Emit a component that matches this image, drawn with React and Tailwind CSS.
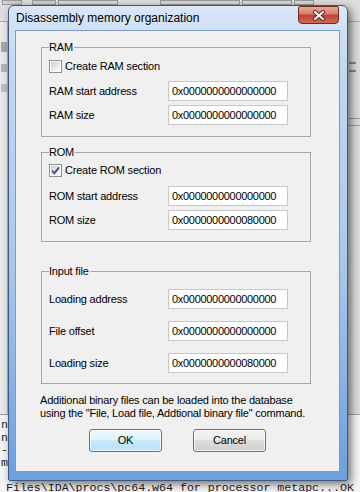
import React from "react";

const ui = { fontFamily: '"Liberation Sans", Arial, sans-serif' };
const mono = { fontFamily: '"Liberation Mono", "Courier New", monospace' };

function CheckBox({ checked }) {
  return (
    <span className="w-[13px] h-[13px] border border-[#8e8f8f] bg-white p-[1px] shrink-0">
      <span className="flex w-full h-full items-center justify-center bg-[linear-gradient(135deg,#c9ccd2,#eef0f2_70%,#f8f8f8)]">
        {checked && (
          <svg width="9" height="9" viewBox="0 0 9 9">
            <path d="M1 4.6 L3.4 7.2 L8 1.4" fill="none" stroke="#42598a" strokeWidth="1.9" />
          </svg>
        )}
      </span>
    </span>
  );
}

function Field({ label, value, className = "" }) {
  return (
    <div className={`flex items-center ${className}`}>
      <span className="w-[119px]">{label}</span>
      <div className="w-[120px] h-[20px] border border-[#c6c6c6] bg-white flex items-center pl-[3px] tracking-[-0.3px]">
        {value}
      </div>
    </div>
  );
}

function Group({ title, className = "", children }) {
  return (
    <fieldset className={`w-[270px] ml-[25px] border border-[#a6a6a6] pl-[7px] ${className}`}>
      <legend className="leading-[13px] pr-[1px]">{title}</legend>
      {children}
    </fieldset>
  );
}

function Background() {
  return (
    <div className="absolute inset-0 flex flex-col bg-[#e9e9e9]">
      <div className="h-[22px] flex gap-[2px] border-b border-[#a9a9a9] bg-[#dedede] pl-[2px]">
        <span className="w-[20px] h-[5px] border border-[#9a9a9a] bg-[#d0d0d0]" />
        <span className="w-[24px] h-[5px] border border-[#9a9a9a] bg-[#d0d0d0] ml-[8px]" />
        <span className="w-[60px] h-[5px] border border-[#9a9a9a] bg-[#d8d8d8]" />
        <span className="w-[80px] h-[5px] border border-[#9a9a9a] bg-[#d8d8d8] ml-[40px]" />
        <span className="w-[50px] h-[5px] border border-[#9a9a9a] bg-[#d8d8d8]" />
        <span className="w-[20px] h-[5px] border border-[#9a9a9a] bg-[#d8d8d8]" />
      </div>
      <div className="flex-1 flex">
        <div className="w-[8px] border-r border-[#b5b5b5] flex flex-col gap-[12px] pt-[20px] pl-[1px]">
          <span className="w-[6px] h-[10px] bg-[#a8a8a8]" />
          <span className="w-[6px] h-[8px] bg-[#b4b4b4]" />
          <span className="w-[6px] h-[8px] bg-[#c0c0c0]" />
        </div>
        <div className="flex-1" />
        <div className="w-[16px] border-l border-[#9d9d9d] bg-[#dcdcdc] flex flex-col gap-[6px] pt-[40px] pl-[4px]">
          <span className="w-[7px] h-[2px] bg-[#8a8a8a]" />
          <span className="w-[7px] h-[2px] bg-[#8a8a8a]" />
          <span className="h-[1px] bg-[#9a9a9a] mt-[40px]" />
          <span className="h-[1px] bg-[#9a9a9a]" />
        </div>
      </div>
      <div className="h-[78px] border-t border-[#a0a0a0] bg-[#f4f4f4] pt-[4px] text-[11.6px] leading-[12.5px] text-[#222]" style={mono}>
        <div className="pl-[1px]">ng</div>
        <div className="pl-[1px]">ng</div>
        <div className="pl-[1px]">--</div>
        <div className="pl-[1px]">mo</div>
        <div>&nbsp;</div>
        <div className="pl-[6px] whitespace-nowrap">Files\IDA\procs\pc64.w64 for processor metapc...OK</div>
      </div>
    </div>
  );
}

export default function App() {
  return (
    <div className="relative w-[360px] h-[492px] overflow-hidden text-[11px] text-black" style={ui}>
      <Background />
      <div className="absolute left-[8px] top-[5px] w-[340px] h-[476px] rounded-t-[6px] rounded-b-[2px] border border-[#3d5a80] bg-[linear-gradient(#d9e7f6,#c3d8f1_12%,#a9c7ec_55%,#6c9fde)] shadow-[3px_3px_8px_rgba(0,0,0,0.55)] flex flex-col">
        <div className="h-[24px] flex justify-between pl-[7px]">
          <span className="self-center text-[12px] text-black">Disassembly memory organization</span>
          <button className="mr-[8px] w-[41px] h-[18px] rounded-b-[4px] rounded-t-[2px] border border-[#6b2a22] bg-[linear-gradient(#e9aa9c,#d57a68_45%,#c1402f_50%,#cf6a55)] flex items-center justify-center">
            <svg width="14" height="11" viewBox="0 0 14 11">
              <path d="M3 2 L11 9 M11 2 L3 9" stroke="#5b1e16" strokeWidth="4" strokeLinecap="round" />
              <path d="M3 2 L11 9 M11 2 L3 9" stroke="#ffffff" strokeWidth="2.2" strokeLinecap="round" />
            </svg>
          </button>
        </div>
        <div className="ml-[6px] w-[325px] h-[442px] border border-[#7f9bc0] bg-[#f0f0f0] flex flex-col tracking-[-0.2px]">
          <Group title="RAM" className="mt-[10px] pb-[11px]">
            <label className="mt-[6px] h-[13px] flex items-center gap-[3px]">
              <CheckBox />
              <span>Create RAM section</span>
            </label>
            <Field label="RAM start address" value="0x0000000000000000" className="mt-[8px]" />
            <Field label="RAM size" value="0x0000000000000000" className="mt-[4px]" />
          </Group>
          <Group title="ROM" className="mt-[9px] pb-[11px]">
            <label className="mt-[5px] h-[13px] flex items-center gap-[3px]">
              <CheckBox checked />
              <span>Create ROM section</span>
            </label>
            <Field label="ROM start address" value="0x0000000000000000" className="mt-[9px]" />
            <Field label="ROM size" value="0x0000000000080000" className="mt-[4px]" />
          </Group>
          <Group title="Input file" className="mt-[23px] pb-[10px]">
            <Field label="Loading address" value="0x0000000000000000" className="mt-[11px]" />
            <Field label="File offset" value="0x0000000000000000" className="mt-[12px]" />
            <Field label="Loading size" value="0x0000000000080000" className="mt-[12px]" />
          </Group>
          <p className="mt-[10px] ml-[24px] leading-[13px]">
            Additional binary files can be loaded into the database
            <br />
            using the "File, Load file, Addtional binary file" command.
          </p>
          <div className="mt-[9px] flex justify-center gap-[31px]">
            <button className="w-[73px] h-[23px] rounded-[3px] border border-[#3c7fb1] bg-[linear-gradient(#eef8fd,#e0f2fc_50%,#c9eafc_50%,#b7e0f7)] shadow-[inset_0_0_0_1px_rgba(255,255,255,0.75)]">
              OK
            </button>
            <button className="w-[73px] h-[23px] rounded-[3px] border border-[#707070] bg-[linear-gradient(#f2f2f2,#ebebeb_50%,#dddddd_50%,#cfcfcf)] shadow-[inset_0_0_0_1px_rgba(255,255,255,0.75)]">
              Cancel
            </button>
          </div>
        </div>
      </div>
    </div>
  );
}
